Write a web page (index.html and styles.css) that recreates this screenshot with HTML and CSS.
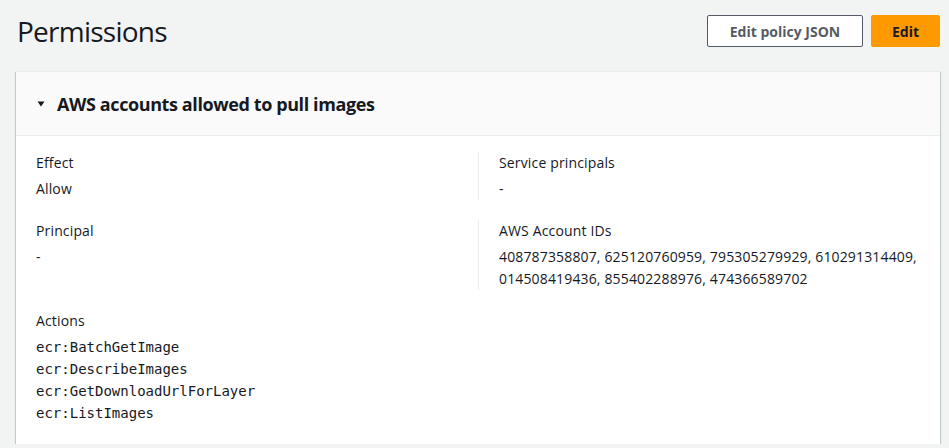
FILE: index.html
```html
<!DOCTYPE html>
<html>
<head>
<meta charset="utf-8">
<link rel="stylesheet" href="styles.css">
</head>
<body>
<div class="page">
  <div class="page-header">
    <h1 class="page-title">Permissions</h1>
    <div class="actions">
      <button class="btn btn-normal">Edit policy JSON</button>
      <button class="btn btn-primary">Edit</button>
    </div>
  </div>
  <div class="panel">
    <div class="panel-header">
      <svg class="caret" width="10" height="10" viewBox="0 0 10 10"><path d="M1.5 2.5 H8.5 L5 7.5 Z" fill="#16191f"/></svg>
      <h2 class="panel-title">AWS accounts allowed to pull images</h2>
    </div>
    <div class="panel-body">
      <div class="kv">
        <div class="label">Effect</div>
        <div class="value">Allow</div>
      </div>
      <div class="kv divided">
        <div class="label">Service principals</div>
        <div class="value">-</div>
      </div>
      <div class="kv">
        <div class="label">Principal</div>
        <div class="value">-</div>
      </div>
      <div class="kv divided">
        <div class="label">AWS Account IDs</div>
        <div class="value">408787358807, 625120760959, 795305279929, 610291314409, 014508419436, 855402288976, 474366589702</div>
      </div>
      <div class="kv full">
        <div class="label">Actions</div>
        <div class="value mono">ecr:BatchGetImage<br>ecr:DescribeImages<br>ecr:GetDownloadUrlForLayer<br>ecr:ListImages</div>
      </div>
    </div>
  </div>
</div>
</body>
</html>
```
FILE: styles.css
```css
html, body {
  margin: 0;
  padding: 0;
  background: #f2f3f3;
  font-family: "Open Sans", "Noto Sans", sans-serif;
  color: #16191f;
}
.page {
  padding: 0 9px 0 16px;
}
.page-header {
  display: flex;
  align-items: center;
  justify-content: space-between;
  padding-top: 15px;
  margin-bottom: 24px;
}
.page-title {
  margin: 0;
  font-size: 28px;
  font-weight: 400;
  line-height: 32px;
  padding-left: 1px;
  letter-spacing: -0.75px;
}
.actions {
  display: flex;
  gap: 8px;
}
.btn {
  height: 32px;
  border-radius: 2px;
  font-family: inherit;
  font-size: 14px;
  font-weight: 700;
  padding: 0 20px;
  cursor: pointer;
}
.btn-normal {
  width: 156px;
  background: #fff;
  border: 1px solid #545b64;
  color: #545b64;
}
.btn-primary {
  width: 69px;
  background: #ff9900;
  border: 1px solid #ff9900;
  color: #16191f;
}
.panel {
  background: #fff;
  border-top: 1px solid #eaeded;
  box-shadow: 0 1px 1px 0 rgba(0,28,36,.3), 1px 1px 1px 0 rgba(0,28,36,.15), -1px 1px 1px 0 rgba(0,28,36,.15);
}
.panel-header {
  display: flex;
  align-items: center;
  height: 63px;
  background: #fafafa;
  border-bottom: 1px solid #eaeded;
  padding-left: 20px;
}
.caret {
  margin-right: 11px;
}
.panel-title {
  margin: 0;
  font-size: 18px;
  font-weight: 700;
  line-height: 22px;
  letter-spacing: -0.4px;
}
.panel-body {
  display: grid;
  grid-template-columns: 1fr 1fr;
  row-gap: 20px;
  padding: 16px 20px 20px 20px;
}
.kv {
  font-size: 14px;
  line-height: 22px;
  letter-spacing: 0.15px;
}
.kv.divided {
  border-left: 1px solid #eaeded;
  padding-left: 20px;
}
.kv.full {
  grid-column: 1 / 3;
}
.label {
  margin-bottom: 4px;
}
.mono {
  font-family: "DejaVu Sans Mono", monospace;
  font-size: 14px;
  line-height: 22px;
  letter-spacing: 0;
}
```
